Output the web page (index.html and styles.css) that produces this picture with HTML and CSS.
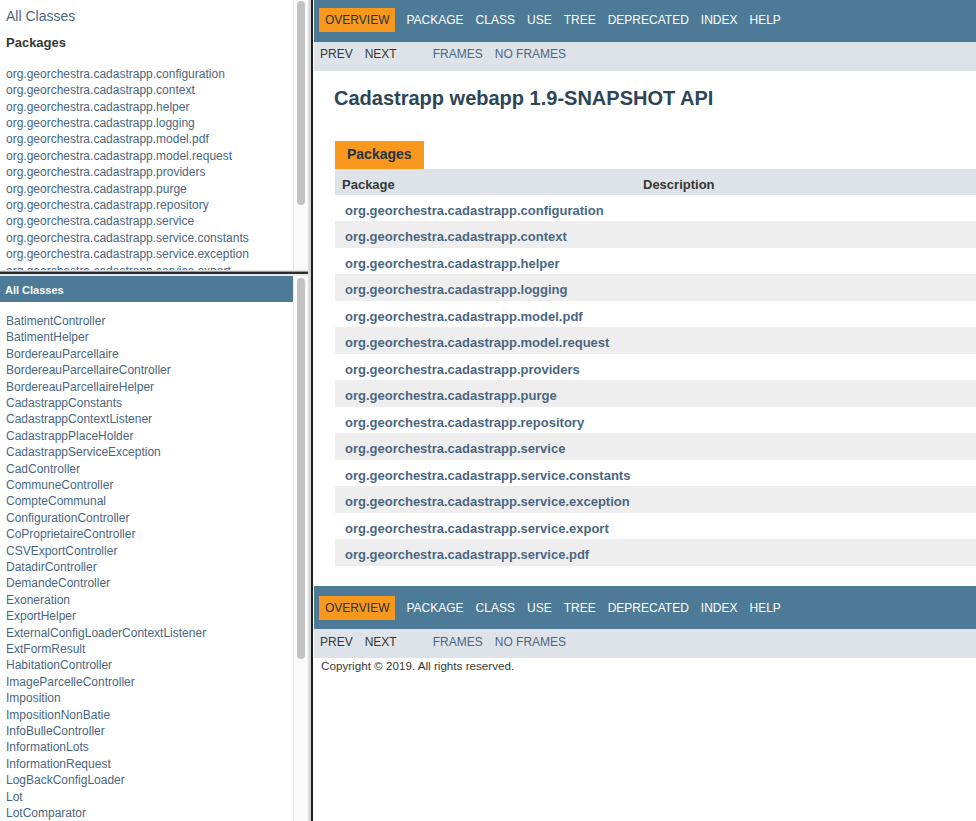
FILE: index.html
```html
<!DOCTYPE html>
<html lang="en">
<head>
<meta charset="utf-8">
<title>Overview (Cadastrapp webapp 1.9-SNAPSHOT API)</title>
<link rel="stylesheet" href="styles.css">
</head>
<body>
<div class="frameset">
  <div class="left">
    <div class="pane pane-top">
      <div class="pane-content">
        <div class="index-header"><a href="#">All Classes</a></div>
        <h2 class="index-title">Packages</h2>
        <ul class="index-list">
          <li><a href="#">org.georchestra.cadastrapp.configuration</a></li>
          <li><a href="#">org.georchestra.cadastrapp.context</a></li>
          <li><a href="#">org.georchestra.cadastrapp.helper</a></li>
          <li><a href="#">org.georchestra.cadastrapp.logging</a></li>
          <li><a href="#">org.georchestra.cadastrapp.model.pdf</a></li>
          <li><a href="#">org.georchestra.cadastrapp.model.request</a></li>
          <li><a href="#">org.georchestra.cadastrapp.providers</a></li>
          <li><a href="#">org.georchestra.cadastrapp.purge</a></li>
          <li><a href="#">org.georchestra.cadastrapp.repository</a></li>
          <li><a href="#">org.georchestra.cadastrapp.service</a></li>
          <li><a href="#">org.georchestra.cadastrapp.service.constants</a></li>
          <li><a href="#">org.georchestra.cadastrapp.service.exception</a></li>
          <li><a href="#">org.georchestra.cadastrapp.service.export</a></li>
        </ul>
      </div>
      <div class="scrollbar"><div class="thumb thumb-top"></div></div>
    </div>
    <div class="hsplit"></div>
    <div class="pane pane-bottom">
      <div class="pane-content">
        <h1 class="bar">All Classes</h1>
        <ul class="index-list class-list">
          <li><a href="#">BatimentController</a></li>
          <li><a href="#">BatimentHelper</a></li>
          <li><a href="#">BordereauParcellaire</a></li>
          <li><a href="#">BordereauParcellaireController</a></li>
          <li><a href="#">BordereauParcellaireHelper</a></li>
          <li><a href="#">CadastrappConstants</a></li>
          <li><a href="#">CadastrappContextListener</a></li>
          <li><a href="#">CadastrappPlaceHolder</a></li>
          <li><a href="#">CadastrappServiceException</a></li>
          <li><a href="#">CadController</a></li>
          <li><a href="#">CommuneController</a></li>
          <li><a href="#">CompteCommunal</a></li>
          <li><a href="#">ConfigurationController</a></li>
          <li><a href="#">CoProprietaireController</a></li>
          <li><a href="#">CSVExportController</a></li>
          <li><a href="#">DatadirController</a></li>
          <li><a href="#">DemandeController</a></li>
          <li><a href="#">Exoneration</a></li>
          <li><a href="#">ExportHelper</a></li>
          <li><a href="#">ExternalConfigLoaderContextListener</a></li>
          <li><a href="#">ExtFormResult</a></li>
          <li><a href="#">HabitationController</a></li>
          <li><a href="#">ImageParcelleController</a></li>
          <li><a href="#">Imposition</a></li>
          <li><a href="#">ImpositionNonBatie</a></li>
          <li><a href="#">InfoBulleController</a></li>
          <li><a href="#">InformationLots</a></li>
          <li><a href="#">InformationRequest</a></li>
          <li><a href="#">LogBackConfigLoader</a></li>
          <li><a href="#">Lot</a></li>
          <li><a href="#">LotComparator</a></li>
        </ul>
      </div>
      <div class="scrollbar"><div class="thumb thumb-bottom"></div></div>
    </div>
  </div>
  <div class="vsplit"></div>
  <div class="right">
    <div class="top-nav">
      <ul class="nav-list">
        <li class="nav-active">Overview</li>
        <li>Package</li>
        <li>Class</li>
        <li>Use</li>
        <li><a href="#">Tree</a></li>
        <li><a href="#">Deprecated</a></li>
        <li><a href="#">Index</a></li>
        <li><a href="#">Help</a></li>
      </ul>
    </div>
    <div class="sub-nav">
      <ul class="nav-list">
        <li>Prev</li>
        <li>Next</li>
      </ul>
      <ul class="nav-list nav-frames">
        <li><a href="#">Frames</a></li>
        <li><a href="#">No&nbsp;Frames</a></li>
      </ul>
    </div>
    <div class="header">
      <h1 class="title">Cadastrapp webapp 1.9-SNAPSHOT API</h1>
    </div>
    <div class="content">
      <table class="summary">
        <caption><span>Packages</span></caption>
        <thead>
          <tr><th class="col-first">Package</th><th class="col-last">Description</th></tr>
        </thead>
        <tbody>
          <tr class="alt"><td class="col-first"><a href="#">org.georchestra.cadastrapp.configuration</a></td><td></td></tr>
          <tr class="row"><td class="col-first"><a href="#">org.georchestra.cadastrapp.context</a></td><td></td></tr>
          <tr class="alt"><td class="col-first"><a href="#">org.georchestra.cadastrapp.helper</a></td><td></td></tr>
          <tr class="row"><td class="col-first"><a href="#">org.georchestra.cadastrapp.logging</a></td><td></td></tr>
          <tr class="alt"><td class="col-first"><a href="#">org.georchestra.cadastrapp.model.pdf</a></td><td></td></tr>
          <tr class="row"><td class="col-first"><a href="#">org.georchestra.cadastrapp.model.request</a></td><td></td></tr>
          <tr class="alt"><td class="col-first"><a href="#">org.georchestra.cadastrapp.providers</a></td><td></td></tr>
          <tr class="row"><td class="col-first"><a href="#">org.georchestra.cadastrapp.purge</a></td><td></td></tr>
          <tr class="alt"><td class="col-first"><a href="#">org.georchestra.cadastrapp.repository</a></td><td></td></tr>
          <tr class="row"><td class="col-first"><a href="#">org.georchestra.cadastrapp.service</a></td><td></td></tr>
          <tr class="alt"><td class="col-first"><a href="#">org.georchestra.cadastrapp.service.constants</a></td><td></td></tr>
          <tr class="row"><td class="col-first"><a href="#">org.georchestra.cadastrapp.service.exception</a></td><td></td></tr>
          <tr class="alt"><td class="col-first"><a href="#">org.georchestra.cadastrapp.service.export</a></td><td></td></tr>
          <tr class="row"><td class="col-first"><a href="#">org.georchestra.cadastrapp.service.pdf</a></td><td></td></tr>
        </tbody>
      </table>
    </div>
    <div class="bottom-nav">
      <ul class="nav-list">
        <li class="nav-active">Overview</li>
        <li>Package</li>
        <li>Class</li>
        <li>Use</li>
        <li><a href="#">Tree</a></li>
        <li><a href="#">Deprecated</a></li>
        <li><a href="#">Index</a></li>
        <li><a href="#">Help</a></li>
      </ul>
    </div>
    <div class="sub-nav sub-nav-bottom">
      <ul class="nav-list">
        <li>Prev</li>
        <li>Next</li>
      </ul>
      <ul class="nav-list nav-frames">
        <li><a href="#">Frames</a></li>
        <li><a href="#">No&nbsp;Frames</a></li>
      </ul>
    </div>
    <p class="legal-copy"><small>Copyright &#169; 2019. All rights reserved.</small></p>
  </div>
</div>
</body>
</html>
```

FILE: styles.css
```css
* {
  box-sizing: border-box;
}

html,
body {
  margin: 0;
  padding: 0;
  height: 100%;
}

body {
  font-family: "Liberation Sans", Arial, Helvetica, sans-serif;
  font-size: 14px;
  color: #353833;
  background: #ffffff;
  overflow: hidden;
}

a {
  color: #4a6782;
  text-decoration: none;
}

ul {
  list-style: none;
  margin: 0;
  padding: 0;
}

.frameset {
  display: flex;
  width: 976px;
  height: 821px;
}

/* ---------- left frames ---------- */

.left {
  width: 308px;
  flex: none;
  display: flex;
  flex-direction: column;
}

.pane {
  display: flex;
  overflow: hidden;
  background: #ffffff;
}

.pane-top {
  height: 270px;
  flex: none;
}

.pane-bottom {
  flex: 1;
  min-height: 0;
}

.pane-content {
  flex: 1;
  min-width: 0;
  overflow: hidden;
}

.scrollbar {
  width: 15px;
  flex: none;
  background: #fafafa;
  border-left: 1px solid #e8e8e8;
  padding-left: 3px;
}

.thumb {
  width: 8px;
  background: #c2c2c2;
  border-radius: 4px;
}

.thumb-top {
  margin-top: 1px;
  height: 204px;
}

.thumb-bottom {
  margin-top: 2px;
  height: 381px;
}

.hsplit {
  height: 6px;
  flex: none;
  background: linear-gradient(to bottom, #e4e4e4 0, #e4e4e4 1px, #9a9a9a 1px, #9a9a9a 2px, #2a2a2a 2px, #2a2a2a 4px, #e9e9e9 4px, #e9e9e9 6px);
}

.vsplit {
  width: 6px;
  flex: none;
  background: linear-gradient(to right, #e2e2e2 0, #d0d0d0 3px, #1e1e1e 3px, #1e1e1e 5px, #ffffff 5px);
}

.index-header {
  padding: 8px 0 0 6px;
  font-size: 14px;
  line-height: 16px;
  white-space: nowrap;
}

.index-title {
  margin: 11px 0 0;
  padding-left: 6px;
  font-size: 13px;
  line-height: 15px;
  font-weight: bold;
  color: #353833;
}

.index-list {
  margin-top: 15.8px;
  padding-left: 6px;
  font-size: 12px;
  line-height: 16.4px;
  white-space: nowrap;
}

.bar {
  margin: 0;
  background: #4d7a97;
  color: #ffffff;
  font-size: 11px;
  line-height: 13px;
  font-weight: bold;
  padding: 8.3px 5px 4.4px;
  white-space: nowrap;
}

.class-list {
  margin-top: 11.2px;
}

/* ---------- right frame ---------- */

.right {
  flex: 1;
  min-width: 0;
  overflow: hidden;
  background: #ffffff;
}

.nav-list {
  display: flex;
  font-size: 12px;
  line-height: 14px;
  text-transform: uppercase;
  white-space: nowrap;
}

.nav-list li {
  padding: 5px 6px;
}

.top-nav,
.bottom-nav {
  background: #4d7a97;
  color: #ffffff;
}

.top-nav {
  height: 41.6px;
  padding-top: 8px;
}

.bottom-nav {
  height: 43.6px;
  padding-top: 10px;
  margin-top: 20.3px;
}

.top-nav a,
.bottom-nav a {
  color: #ffffff;
}

.nav-list li.nav-active {
  background: #f8981d;
  color: #253441;
  margin: 0 5px;
}

.sub-nav {
  display: flex;
  background: #dee3e9;
  height: 29px;
  color: #353833;
}

.sub-nav .nav-list li {
  padding-top: 5px;
}

.sub-nav-bottom .nav-list li {
  padding-top: 5.6px;
}

.nav-frames {
  margin-left: 24px;
}

.header {
  padding: 15px 0 0 20px;
}

.title {
  margin: 0;
  font-size: 20px;
  line-height: 24px;
  font-weight: bold;
  color: #2c4557;
  white-space: nowrap;
}

.content {
  padding: 31.3px 0 0 21px;
}

.summary {
  width: 100%;
  border-collapse: collapse;
  border-spacing: 0;
}

.summary caption {
  text-align: left;
  padding: 0;
  caption-side: top;
}

.summary caption span {
  display: inline-block;
  background: #f8981d;
  color: #253441;
  font-weight: bold;
  font-size: 14px;
  line-height: 16px;
  padding: 5px 12px 6.7px;
  white-space: nowrap;
  vertical-align: top;
}

.summary th {
  background: #dee3e9;
  text-align: left;
  font-size: 13px;
  line-height: 15px;
  font-weight: bold;
  color: #353833;
  padding: 8px 3px 3px 7px;
}

.summary th.col-first {
  width: 301px;
}

.summary td {
  font-size: 13px;
  line-height: 15px;
  padding: 8px 3px 3.5px 10px;
  white-space: nowrap;
}

.summary td a {
  font-weight: bold;
}

.summary tr.alt {
  background: #ffffff;
}

.summary tr.row {
  background: #eeeeef;
}

.legal-copy {
  margin: 1px 0 0 7px;
  line-height: 13px;
  color: #353833;
}

.legal-copy small {
  font-size: 11.67px;
}
```
